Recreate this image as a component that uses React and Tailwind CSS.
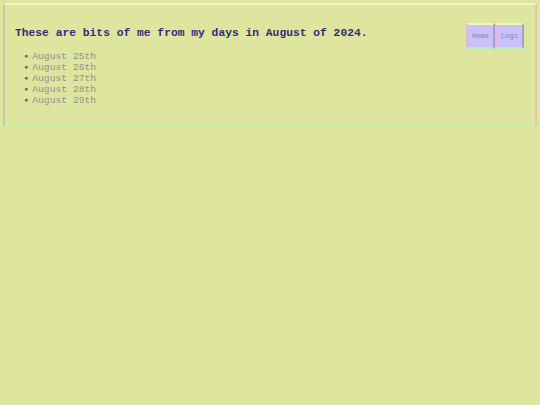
import React from "react";

const days = ["August 25th", "August 26th", "August 27th", "August 28th", "August 29th"];

export default function App() {
  return (
    <div className="min-h-screen bg-[#dee59e] pt-[3px] px-[3px] font-['Liberation_Mono',monospace]">
      <div className="flex justify-between border-2 border-t-[#f3f6bc] border-l-[#c6c9ac] border-r-[#dfc9ac] border-b-[#c9efae] bg-[#dee59e] pl-[10px] pr-[11px] pt-[20px] pb-[19px]">
        <div>
          <h1 className="text-[11.3px] leading-[16px] font-bold text-[#352a78]">
            These are bits of me from my days in August of 2024.
          </h1>
          <ul className="mt-[10px] pl-[9px]">
            {days.map((d) => (
              <li key={d} className="flex items-center text-[9.7px] leading-[11px] text-[#909389]">
                <span className="mr-[4px] text-[7px] text-[#6f7268]">●</span>
                {d}
              </li>
            ))}
          </ul>
        </div>
        <div className="flex self-start -mt-[2px]">
          {["Home", "Logs"].map((b) => (
            <a
              key={b}
              href="#"
              className="flex items-center justify-center w-[29px] h-[26px] border-2 border-t-[#f3f6bc] border-l-[#e6b8d8] border-r-[#a8a0c8] border-b-[#b8ecc8] bg-[#c9c1fa] text-[7px] text-[#8683c0]"
            >
              {b}
            </a>
          ))}
        </div>
      </div>
    </div>
  );
}
